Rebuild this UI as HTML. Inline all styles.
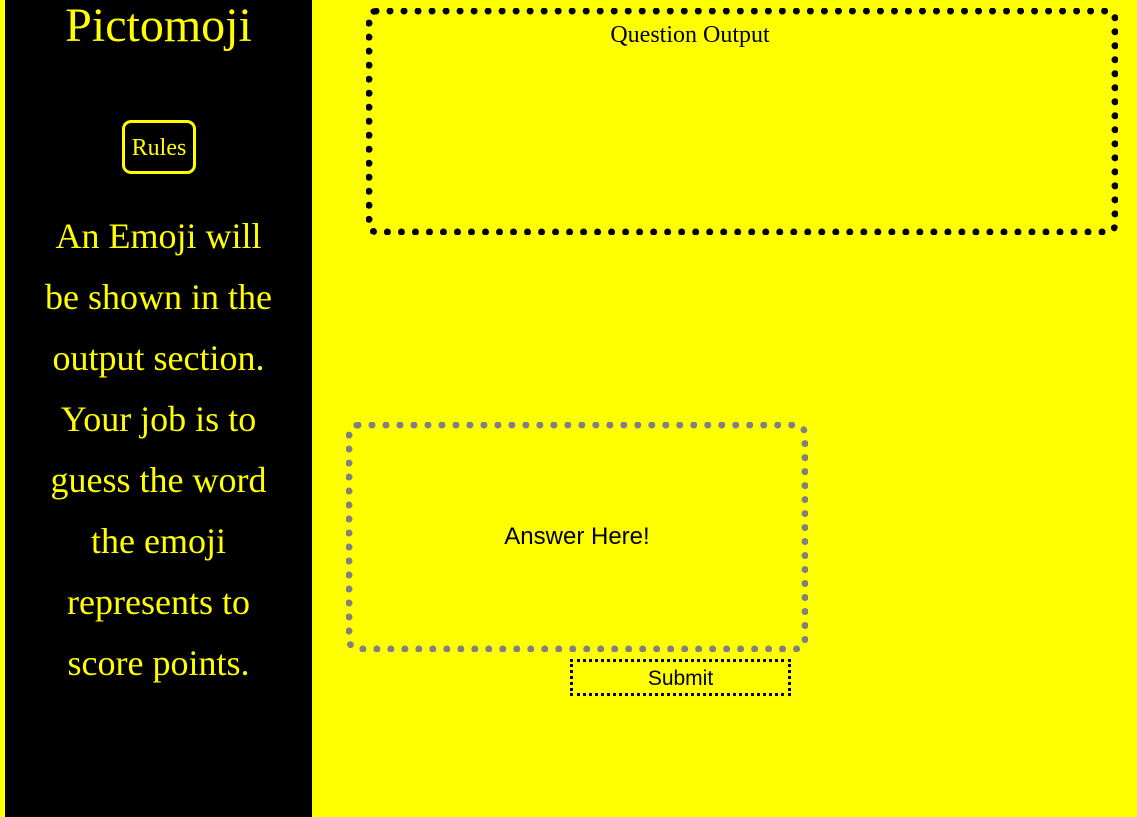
<!DOCTYPE html>
<html><head><style>
html,body{margin:0;padding:0;width:1137px;height:817px;background:#ff0;overflow:hidden}
.serif{font-family:"Liberation Serif","Times New Roman",Times,serif}
.side{position:absolute;left:5px;top:0;width:307px;height:817px;background:#000;color:#ff0;text-align:center}
.title{position:absolute;left:0;width:307px;top:0;font-size:48px;line-height:52px}
.rules{position:absolute;left:117px;top:120px;width:68px;height:48px;border:3px solid #ff0;border-radius:9px;font-size:24px;line-height:50px}
.para{position:absolute;left:0;width:307px;top:206px;font-size:36px;line-height:61px;white-space:nowrap}
.q{position:absolute;left:366px;top:8px;width:738px;height:207px;border:7px dotted #000;border-radius:10px;font-size:24px;line-height:28px;padding-top:6px}
.q span{position:absolute;left:0;width:634px;text-align:center}
.a{position:absolute;left:346px;top:422px;width:448px;height:216px;border:7px dotted #808080;border-radius:12px;font-family:"Liberation Sans",Arial,sans-serif;font-size:24px;text-align:center;line-height:216px}
.s{position:absolute;left:570px;top:659px;width:215px;height:31px;border:3px dotted #000;font-family:"Liberation Sans",Arial,sans-serif;font-size:21px;text-align:center;line-height:33px}
</style></head><body>
<div class="side serif">
<div class="title">Pictomoji</div>
<div class="rules">Rules</div>
<div class="para">An Emoji will<br>be shown in the<br>output section.<br>Your job is to<br>guess the word<br>the emoji<br>represents to<br>score points.</div>
</div>
<div class="q serif"><span>Question Output</span></div>
<div class="a">Answer Here!</div>
<div class="s">Submit</div>
</body></html>
